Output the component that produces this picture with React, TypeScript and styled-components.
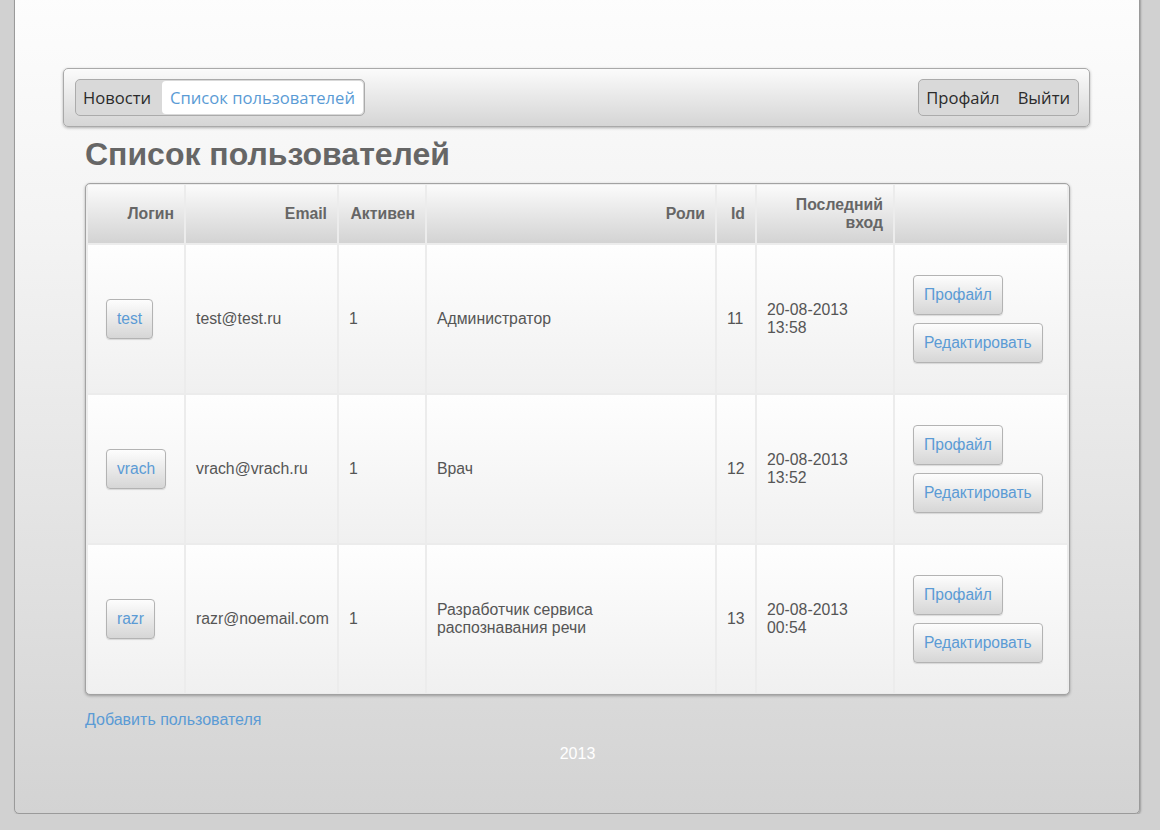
import React from "react";
import styled, { createGlobalStyle } from "styled-components";

const Global = createGlobalStyle`
  * { box-sizing: border-box; }
  html, body { margin: 0; padding: 0; }
  body {
    background: #d1d1d1;
    font-family: "Liberation Sans", Arial, sans-serif;
    overflow: hidden;
  }
`;

const Page = styled.div`
  margin: -6px 20px 0 14px;
  height: 820px;
  padding: 73px 49px 0 48px;
  border: 1px solid #9a9a9a;
  border-radius: 5px;
  background: linear-gradient(#fdfdfd 0%, #f3f3f3 30%, #d3d3d3 100%);
  box-shadow: 1px 1px 2px rgba(0, 0, 0, 0.25);
  display: flex;
  flex-direction: column;
`;

const NavBar = styled.nav`
  display: flex;
  justify-content: space-between;
  align-items: center;
  height: 59px;
  padding: 0 10px 0 11px;
  border: 1px solid #a9a9a9;
  border-radius: 5px;
  background: linear-gradient(#fbfbfb, #d5d5d5);
  box-shadow: 0 1px 3px rgba(0, 0, 0, 0.3);
`;

const NavGroup = styled.div`
  display: flex;
  gap: 4px;
  height: 37px;
  padding: 1px 1px 1px 0;
  border: 1px solid #ababab;
  border-radius: 5px;
  background: #d9d9d9;
`;

const NavItem = styled.a<{ $active?: boolean }>`
  display: flex;
  align-items: center;
  padding: 0 ${(p) => (p.$active ? "8px" : "7px")};
  border-radius: 4px;
  font-family: "Open Sans", "Noto Sans", sans-serif;
  font-size: 16.6px;
  color: ${(p) => (p.$active ? "#5a9bd5" : "#2b2b2b")};
  background: ${(p) => (p.$active ? "#ffffff" : "transparent")};
  cursor: pointer;
`;

const Content = styled.div`
  padding: 0 20px 0 22px;
  display: flex;
  flex-direction: column;
`;

const Title = styled.h1`
  margin: 9px 0 11px;
  font-size: 32px;
  line-height: 36px;
  font-weight: bold;
  color: #666;
`;

const TableFrame = styled.div`
  border: 1px solid #a2a2a2;
  border-radius: 5px;
  overflow: hidden;
  background: #ececec;
  box-shadow: 0 1px 3px rgba(0, 0, 0, 0.3);
`;

const Table = styled.table`
  width: 100%;
  table-layout: fixed;
  border-collapse: separate;
  border-spacing: 2px;
  margin: -1px 0;
  font-size: 15.8px;
  color: #555;

  th:nth-child(1) { width: 96px; }
  th:nth-child(2) { width: 151px; }
  th:nth-child(3) { width: 86px; }
  th:nth-child(4) { width: 288px; }
  th:nth-child(5) { width: 38px; }
  th:nth-child(6) { width: 136px; }
  th:nth-child(7) { width: 172px; }
`;

const Th = styled.th`
  height: 58px;
  padding: 11px 10px;
  text-align: right;
  vertical-align: middle;
  font-weight: bold;
  line-height: 18px;
  color: #666;
  background: linear-gradient(#fbfbfb, #d3d3d3);
`;

const Td = styled.td`
  height: 148px;
  padding: 10px;
  vertical-align: middle;
  line-height: 18px;
  background: linear-gradient(#fefefe, #f0f0f0);
`;

const Button = styled.a`
  display: inline-flex;
  align-items: center;
  height: 40px;
  margin: 4px 8px;
  padding: 0 10px;
  border: 1px solid #b3b3b3;
  border-radius: 4px;
  background: linear-gradient(#fdfdfd, #d6d6d6);
  box-shadow: 0 1px 1px rgba(0, 0, 0, 0.12);
  color: #5b9bd5;
  font-size: 15.6px;
  cursor: pointer;
`;

const Actions = styled.div`
  display: flex;
  flex-direction: column;
  align-items: flex-start;
`;

const AddLink = styled.a`
  margin-top: 16px;
  font-size: 16px;
  line-height: 18px;
  color: #5b9bd5;
  cursor: pointer;
`;

const Footer = styled.div`
  margin-top: 16px;
  text-align: center;
  font-size: 16px;
  line-height: 18px;
  color: #ffffff;
`;

const users = [
  { login: "test", email: "test@test.ru", active: 1, roles: "Администратор", id: 11, date: "20-08-2013", time: "13:58" },
  { login: "vrach", email: "vrach@vrach.ru", active: 1, roles: "Врач", id: 12, date: "20-08-2013", time: "13:52" },
  { login: "razr", email: "razr@noemail.com", active: 1, roles: "Разработчик сервиса распознавания речи", id: 13, date: "20-08-2013", time: "00:54" },
];

export default function App() {
  return (
    <>
      <Global />
      <Page>
        <NavBar>
          <NavGroup>
            <NavItem>Новости</NavItem>
            <NavItem $active>Список пользователей</NavItem>
          </NavGroup>
          <NavGroup>
            <NavItem>Профайл</NavItem>
            <NavItem>Выйти</NavItem>
          </NavGroup>
        </NavBar>
        <Content>
          <Title>Список пользователей</Title>
          <TableFrame>
            <Table>
              <thead>
                <tr>
                  <Th>Логин</Th>
                  <Th>Email</Th>
                  <Th>Активен</Th>
                  <Th>Роли</Th>
                  <Th>Id</Th>
                  <Th>Последний вход</Th>
                  <Th></Th>
                </tr>
              </thead>
              <tbody>
                {users.map((u) => (
                  <tr key={u.id}>
                    <Td>
                      <Button>{u.login}</Button>
                    </Td>
                    <Td>{u.email}</Td>
                    <Td>{u.active}</Td>
                    <Td>{u.roles}</Td>
                    <Td>{u.id}</Td>
                    <Td>
                      {u.date}
                      <br />
                      {u.time}
                    </Td>
                    <Td>
                      <Actions>
                        <Button>Профайл</Button>
                        <Button>Редактировать</Button>
                      </Actions>
                    </Td>
                  </tr>
                ))}
              </tbody>
            </Table>
          </TableFrame>
          <AddLink>Добавить пользователя</AddLink>
          <Footer>2013</Footer>
        </Content>
      </Page>
    </>
  );
}
